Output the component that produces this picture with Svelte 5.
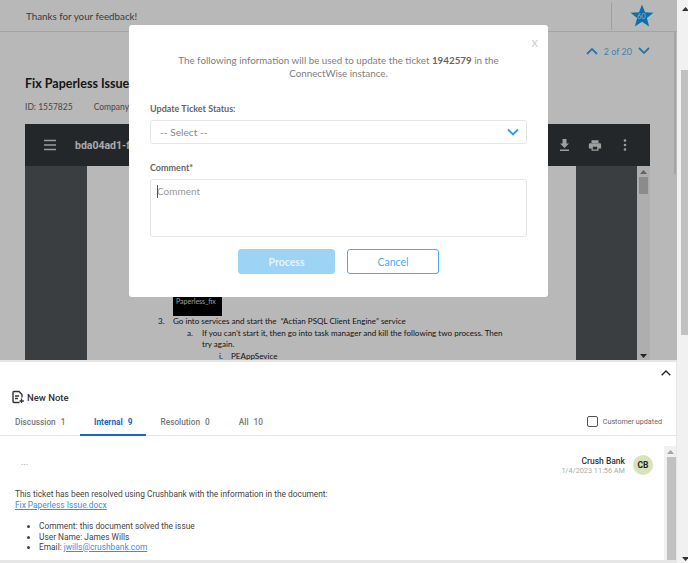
<script>
  const tabs = [
    { label: 'Discussion', count: 1 },
    { label: 'Internal', count: 9, active: true },
    { label: 'Resolution', count: 0 },
    { label: 'All', count: 10 }
  ];
</script>

<div class="page">
  <div class="main">
    <section class="top">
      <header class="bar">
        <span class="thanks">Thanks for your feedback!</span>
        <div class="score">
          <svg width="24" height="24" viewBox="0 0 24 24"><path fill="#0f9cf5" d="M12 .5l3 7.800 8.500.5-6.600 5.300 2.200 8.400L12 17.800 4.900 22.500l2.200-8.400L.5 8.800l8.500-.5z"/></svg>
          <span>60</span>
        </div>
      </header>
      <div class="pager">
        <svg width="12" height="8" viewBox="0 0 12 8"><path d="M1 7l5-5 5 5" fill="none" stroke="#3aa0f0" stroke-width="1.800"/></svg>
        <span>2 of 20</span>
        <svg width="12" height="8" viewBox="0 0 12 8"><path d="M1 1l5 5 5-5" fill="none" stroke="#3aa0f0" stroke-width="1.800"/></svg>
      </div>
      <h1>Fix Paperless Issue</h1>
      <div class="meta"><span>ID: 1557825</span><span>Company</span></div>

      <div class="viewer">
        <div class="vbar">
          <svg class="menu" width="14" height="12" viewBox="0 0 14 12"><path d="M1 1.500h12M1 6h12M1 10.500h12" stroke="#d8d8d8" stroke-width="1.500"/></svg>
          <span class="fname">bda04ad1-f</span>
          <div class="vtools">
            <svg width="14" height="14" viewBox="0 0 14 14"><path fill="#dcdcdc" d="M4.500 1h4v4.500H11L6.500 10 2 5.500h2.500zM2 11.500h9V13H2z"/></svg>
            <svg width="14" height="13" viewBox="0 0 16 14"><path fill="#dcdcdc" d="M4 1h8v3H4zM2.500 4.500h11A1.500 1.500 0 0 1 15 6v4.500h-3V13H4v-2.500H1V6a1.500 1.500 0 0 1 1.500-1.500zM5.500 8.500V11.500h5V8.500z"/></svg>
            <svg class="kebab" width="4" height="12" viewBox="0 0 4 12"><circle cx="2" cy="1.500" r="1.300" fill="#dcdcdc"/><circle cx="2" cy="6" r="1.300" fill="#dcdcdc"/><circle cx="2" cy="10.500" r="1.300" fill="#dcdcdc"/></svg>
          </div>
        </div>
        <div class="vbody">
          <div class="doc">
            <div class="thumb">Paperless_fix</div>
            <p class="l1"><span>3.</span>Go into services and start the &nbsp;“Actian PSQL Client Engine” service</p>
            <p class="l2"><span>a.</span>If you can’t start it, then go into task manager and kill the following two process. Then<br/>try again.</p>
            <p class="l3"><span>i.</span>PEAppSevice</p>
          </div>
          <div class="vscroll">
            <svg width="7" height="4" viewBox="0 0 7 4"><path d="M3.500 0L7 4H0z" fill="#8a8a8a"/></svg>
            <i></i>
            <svg class="dn" width="7" height="4" viewBox="0 0 7 4"><path d="M3.500 4L7 0H0z" fill="#333"/></svg>
          </div>
        </div>
      </div>

      <div class="overlay"></div>
      <div class="pagethumb"></div>
      <div class="modal">
        <span class="close">x</span>
        <p class="intro">The following information will be used to update the ticket <b>1942579</b> in the ConnectWise instance.</p>
        <label class="lbl first" for="st">Update Ticket Status:</label>
        <div class="select" id="st">
          <span>-- Select --</span>
          <svg width="12" height="8" viewBox="0 0 12 8"><path d="M1 1.500l5 5 5-5" fill="none" stroke="#2e9be6" stroke-width="1.800"/></svg>
        </div>
        <label class="lbl second" for="cm">Comment*</label>
        <div class="area" id="cm"><i></i>Comment</div>
        <div class="btns">
          <button class="process">Process</button>
          <button class="cancel">Cancel</button>
        </div>
      </div>
    </section>

    <section class="bottom">
      <div class="collapse">
        <svg width="10" height="6" viewBox="0 0 10 6"><path d="M.7 5.300L5 1l4.300 4.300" fill="none" stroke="#222" stroke-width="1.300"/></svg>
      </div>
      <div class="newnote">
        <svg width="12" height="14" viewBox="0 0 12 14"><path d="M7.500 12.500H2a1 1 0 0 1-1-1v-9a1 1 0 0 1 1-1h5l3 3v3" fill="none" stroke="#333" stroke-width="1.400"/><path d="M3 6h4M3 8.500h3M9.500 8.500v4.500M7.500 11h4.400" stroke="#333" stroke-width="1.300"/></svg>
        <span>New Note</span>
      </div>
      <div class="tabs">
        {#each tabs as t}
          <div class="tab" class:active={t.active}>{t.label}<span>{t.count}</span></div>
        {/each}
        <div class="cu"><i></i><span>Customer updated</span></div>
      </div>
      <div class="notes">
        <div class="note">
          <div class="nhead">
            <span class="dots">...</span>
            <div class="who"><b>Crush Bank</b><small>1/4/2023 11:56 AM</small></div>
            <div class="avatar">CB</div>
          </div>
          <p class="txt">This ticket has been resolved using Crushbank with the information in the document:<br/><a href="#top">Fix Paperless Issue.docx</a></p>
          <ul>
            <li>Comment: this document solved the issue</li>
            <li>User Name: James Wills</li>
            <li>Email: <a href="#top">jwills@crushbank.com</a></li>
          </ul>
        </div>
        <div class="nscroll">
          <svg width="7" height="4" viewBox="0 0 7 4"><path d="M3.500 0L7 4H0z" fill="#a5a5a5"/></svg>
          <i></i>
        </div>
      </div>
    </section>
  </div>
  <aside class="outer">
    <svg class="up" width="7" height="4" viewBox="0 0 7 4"><path d="M3.500 0L7 4H0z" fill="#333"/></svg>
    <i></i>
    <svg class="dn" width="7" height="4" viewBox="0 0 7 4"><path d="M3.500 4L7 0H0z" fill="#333"/></svg>
  </aside>
</div>

<style>
  :global(body) { margin: 0; background: #fff; }
  .page { width: 688px; height: 563px; display: flex; overflow: hidden; font-family: Roboto, sans-serif; }
  .main { width: 677px; flex: none; display: flex; flex-direction: column; background: #e6e6e6; }

  .top { position: relative; height: 360px; background: #fff; overflow: hidden; flex: none; font-family: Lato, sans-serif; }
  .bar { height: 31px; display: flex; align-items: center; justify-content: space-between; padding: 0 24px 0 26px; border-bottom: 1px solid #e4e4e4; }
  .thanks { font-size: 9.800px; color: #555; }
  .score { position: relative; width: 56px; height: 28px; margin-right: -14px; padding-left: 18px; box-sizing: border-box; border-left: 1px solid #ddd; display: flex; align-items: center; }
  .score span { position: absolute; left: 25px; top: 10px; font-size: 7.500px; color: #d8eaf5; }
  .pager { display: flex; justify-content: flex-end; align-items: center; gap: 6px; height: 12px; margin: 13px 27px 0 0; font-size: 9px; color: #5fb4f5; }
  h1 { margin: 19px 0 0 25px; font-size: 12.500px; line-height: 16px; color: #222; font-weight: 700; }
  .meta { margin: 9px 0 0 25px; display: flex; gap: 21px; font-size: 8.500px; line-height: 12px; color: #666; }
  .viewer { position: absolute; left: 25px; top: 124px; width: 625px; height: 236px; background: #525659; font-family: "Liberation Sans", sans-serif; }
  .vbar { height: 42px; background: #323639; display: flex; align-items: center; padding-left: 18px; }
  .fname { margin-left: 18px; font-size: 10.500px; font-weight: 700; color: #e8eaed; font-family: Roboto, sans-serif; }
  .vtools { margin-left: auto; margin-right: 23px; display: flex; gap: 16px; align-items: center; }
  .kebab { margin-left: 5px; }
  .vbody { position: relative; display: flex; height: 194px; }
  .doc { margin-left: 62px; width: 489px; background: #fff; position: relative; height: 194px; overflow: hidden; font-family: Lato, sans-serif; font-size: 8.050px; line-height: 11.500px; color: #222; white-space: nowrap; }
  .thumb { position: absolute; left: 86px; top: 128px; width: 49px; height: 22px; padding: 2px 0 0 3px; box-sizing: border-box; background: #000; color: #ddd; font-size: 7px; }
  .doc p { position: absolute; margin: 0; }
  .doc p span { position: absolute; }
  .l1 { left: 86px; top: 150px; }
  .l1 span { left: -15px; }
  .l2 { left: 115px; top: 161.500px; }
  .l2 span { left: -15px; }
  .l3 { left: 144px; top: 184.500px; }
  .l3 span { left: -12px; }
  .vscroll { position: absolute; right: 0; top: 0; width: 13px; height: 194px; background: #f1f1f1; display: flex; flex-direction: column; align-items: center; padding-top: 4px; box-sizing: border-box; }
  .vscroll i { width: 9px; height: 17px; margin-top: 3px; background: #c1c1c1; }
  .vscroll .dn { margin-top: auto; margin-bottom: 2px; }

  .overlay { position: absolute; inset: 0; background: rgba(0,0,0,.28); }
  .pagethumb { position: absolute; right: 1px; top: 32px; width: 2px; height: 142px; background: rgba(0,0,0,.1); }
  .modal { position: absolute; left: 129px; top: 25px; width: 419px; height: 272px; background: #fff; border-radius: 3px; color: #666; box-sizing: border-box; padding: 0 21px; }
  .close { position: absolute; right: 10px; top: 10px; font-size: 13px; line-height: 14px; color: #cfcfcf; }
  .intro { margin: 29px 12px 0; font-size: 9.800px; line-height: 12.500px; color: #808080; text-align: center; }
  .intro b { color: #666; }
  .lbl { display: block; font-size: 9px; font-weight: 700; line-height: 12px; color: #666; }
  .first { margin-top: 24px; }
  .second { margin-top: 18px; }
  .select { margin-top: 5px; height: 24px; box-sizing: border-box; border: 1px solid #e6e6e6; border-radius: 3px; display: flex; align-items: center; justify-content: space-between; padding: 0 7px 0 9px; font-size: 10.200px; color: #888; }
  .area { position: relative; margin-top: 5px; height: 58px; box-sizing: border-box; border: 1px solid #e6e6e6; border-radius: 3px; padding: 5px 6px; font-size: 10px; line-height: 12px; color: #999; }
  .area i { position: absolute; left: 6px; top: 5px; width: 1px; height: 13px; background: #555; }
  .btns { display: flex; justify-content: center; gap: 12px; margin-top: 12px; }
  button { height: 25px; border-radius: 3px; font: 700 10.500px Lato, sans-serif; padding: 0; box-sizing: border-box; }
  .process { width: 97px; background: #9dd4f5; border: 1px solid #9dd4f5; color: #e4f3fc; }
  .cancel { width: 92px; background: #fff; border: 1px solid #45aef0; color: #45aef0; font-weight: 400; }

  .bottom { position: relative; flex: 1; min-height: 0; margin: 2px 1px 3px 0; background: #fff; display: flex; flex-direction: column; }
  .collapse { position: absolute; right: 5px; top: 8px; line-height: 0; }
  .newnote { display: flex; align-items: center; gap: 3px; margin: 28px 0 0 12px; height: 14px; font-size: 9.500px; font-weight: 500; color: #333; flex: none; }
  .tabs { display: flex; align-items: flex-start; flex: none; height: 32px; padding-left: 1px; border-bottom: 1px solid #e5e5e5; box-sizing: border-box; }
  .tab { height: 32px; line-height: 37px; padding: 0 14px; font-size: 8.300px; font-weight: 500; color: #777; box-sizing: border-box; }
  .tab:first-child { min-width: 79px; }
  .tab:nth-child(4) { margin-left: 1px; }
  .tab span { margin-left: 5px; }
  .active { color: #1769c4; border-bottom: 2px solid #1769c4; font-weight: 700; }
  .cu { margin-left: auto; margin-right: 14px; height: 100%; display: flex; align-items: center; gap: 5px; padding-top: 4px; box-sizing: border-box; font-size: 7.200px; color: #666; }
  .cu i { width: 9px; height: 9px; border: 1px solid #555; border-radius: 2px; }
  .notes { flex: 1; min-height: 0; display: flex; position: relative; }
  .note { flex: 1; padding: 19px 0 0 15px; font-size: 8.350px; color: #444; overflow: hidden; }
  .nhead { display: flex; align-items: center; height: 20px; padding-right: 11px; }
  .dots { font-size: 9px; color: #888; margin: 0 0 6px 6px; }
  .who { margin-left: auto; display: flex; flex-direction: column; align-items: flex-end; margin-right: 8px; padding-top: 1px; }
  .who b { font-weight: 500; font-size: 8.500px; line-height: 10px; color: #333; }
  .who small { font-size: 7.300px; line-height: 10px; color: #aaa; }
  .avatar { width: 20px; height: 20px; border-radius: 50%; background: #d9e3b9; color: #222; font-size: 8.500px; font-weight: 700; text-align: center; line-height: 20px; }
  .txt { margin: 14px 0 0; line-height: 10.500px; }
  a { color: #3a8ee6; text-decoration: underline; }
  ul { margin: 11px 0 0; padding: 0 0 0 24px; line-height: 10.500px; }
  .nscroll { width: 12px; background: #f1f1f1; display: flex; flex-direction: column; align-items: center; padding-top: 4px; box-sizing: border-box; margin: 10px 0 0 0; }
  .nscroll i { width: 9px; flex: 1; margin-top: 3px; margin-left: 2px; background: #c1c1c1; }

  .outer { width: 11px; flex: none; background: #f1f1f1; display: flex; flex-direction: column; align-items: flex-end; padding-top: 7px; box-sizing: border-box; }
  .outer .up { margin-right: -1px; }
  .outer i { width: 7px; height: 265px; margin-top: 59px; background: #c1c1c1; }
  .outer .dn { margin-top: auto; margin-bottom: 2px; margin-right: -1px; }
</style>
